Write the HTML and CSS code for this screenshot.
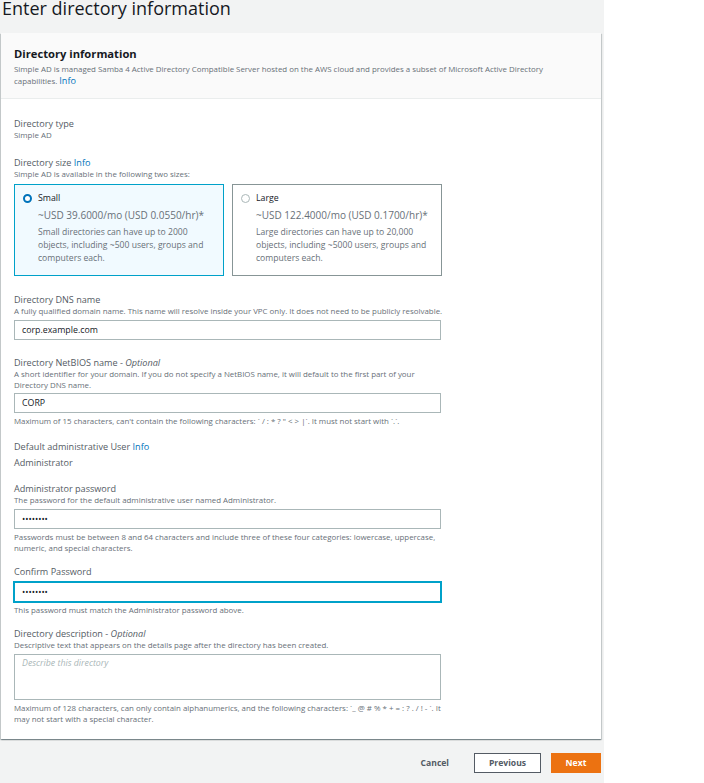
FILE: index.html
```html
<!DOCTYPE html>
<html lang="en">
<head>
<meta charset="utf-8">
<title>Enter directory information</title>
<link rel="stylesheet" href="styles.css">
</head>
<body>
<div class="page">
  <h1 class="title">Enter directory information</h1>
  <div class="card">
    <div class="card-header">
      <h2 class="card-title">Directory information</h2>
      <p class="card-desc">Simple AD is managed Samba 4 Active Directory Compatible Server hosted on the AWS cloud and provides a subset of Microsoft Active Directory capabilities. <a class="info info-lg">Info</a></p>
    </div>
    <div class="card-body">
      <div class="field f-type">
        <div class="label">Directory type</div>
        <div class="hint">Simple AD</div>
      </div>
      <div class="field f-size">
        <div class="label">Directory size <a class="info">Info</a></div>
        <div class="hint">Simple AD is available in the following two sizes:</div>
        <div class="tiles">
          <div class="tile tile-on">
            <div class="tile-head"><span class="radio radio-on"></span><span class="tile-name">Small</span></div>
            <div class="tile-price">~USD 39.6000/mo (USD 0.0550/hr)*</div>
            <div class="tile-desc">Small directories can have up to 2000 objects, including ~500 users, groups and computers each.</div>
          </div>
          <div class="tile">
            <div class="tile-head"><span class="radio"></span><span class="tile-name">Large</span></div>
            <div class="tile-price">~USD 122.4000/mo (USD 0.1700/hr)*</div>
            <div class="tile-desc">Large directories can have up to 20,000 objects, including ~5000 users, groups and computers each.</div>
          </div>
        </div>
      </div>
      <div class="field f-dns">
        <div class="label">Directory DNS name</div>
        <div class="hint">A fully qualified domain name. This name will resolve inside your VPC only. It does not need to be publicly resolvable.</div>
        <div class="input">corp.example.com</div>
      </div>
      <div class="field f-netbios">
        <div class="label">Directory NetBIOS name - <i>Optional</i></div>
        <div class="hint">A short identifier for your domain. If you do not specify a NetBIOS name, it will default to the first part of your Directory DNS name.</div>
        <div class="input">CORP</div>
        <div class="hint after">Maximum of 15 characters, can't contain the following characters: ` / : * ? " &lt; &gt; |`. It must not start with `.`.</div>
      </div>
      <div class="field f-user">
        <div class="label">Default administrative User <a class="info">Info</a></div>
        <div class="label value">Administrator</div>
      </div>
      <div class="field f-pass">
        <div class="label">Administrator password</div>
        <div class="hint">The password for the default administrative user named Administrator.</div>
        <div class="input dots">••••••••</div>
        <div class="hint after">Passwords must be between 8 and 64 characters and include three of these four categories: lowercase, uppercase, numeric, and special characters.</div>
      </div>
      <div class="field f-confirm">
        <div class="label">Confirm Password</div>
        <div class="input dots focus">••••••••</div>
        <div class="hint after">This password must match the Administrator password above.</div>
      </div>
      <div class="field f-desc">
        <div class="label">Directory description - <i>Optional</i></div>
        <div class="hint">Descriptive text that appears on the details page after the directory has been created.</div>
        <div class="input textarea"><span class="placeholder">Describe this directory</span></div>
        <div class="hint after">Maximum of 128 characters, can only contain alphanumerics, and the following characters: `_ @ # % * + = : ? . / ! - `. It may not start with a special character.</div>
      </div>
    </div>
  </div>
  <div class="actions">
    <span class="btn btn-link">Cancel</span>
    <span class="btn btn-normal">Previous</span>
    <span class="btn btn-primary">Next</span>
  </div>
</div>
</body>
</html>
```

FILE: styles.css
```css
* { box-sizing: border-box; }
html, body { margin: 0; padding: 0; background: #ffffff; }
body { font-family: "Open Sans", "Liberation Sans", sans-serif; color: #16191f; }

.page {
  width: 604px;
  min-height: 783px;
  background: #f2f3f3;
  overflow: hidden;
}

.title {
  margin: 0 0 17px 2px;
  font-size: 18px;
  line-height: 17px;
  font-weight: 400;
  color: #16191f;
}

.card {
  margin-left: 1px;
  width: 600px;
  margin-top: -1px;
  background: #ffffff;
  box-shadow: 0 1px 1px 0 rgba(0, 28, 36, 0.3), 1px 1px 1px 0 rgba(0, 28, 36, 0.15), -1px 1px 1px 0 rgba(0, 28, 36, 0.15);
}

.card-header {
  height: 66px;
  padding: 13px 13px 0 13px;
  background: #fafafa;
  border-bottom: 1px solid #eaeded;
}
.card-title {
  margin: 0;
  font-size: 11.2px;
  line-height: 16px;
  font-weight: 700;
  color: #16191f;
}
.card-desc {
  margin: 1px 0 0 0;
  max-width: 550px;
  font-size: 7.9px;
  line-height: 12px;
  color: #687078;
}

.info { color: #0073bb; text-decoration: none; }
.info-lg { font-size: 9.1px; line-height: 10px; }

.card-body { padding: 19px 13px 14px 13px; }

.label {
  font-size: 9.1px;
  line-height: 12px;
  color: #545b64;
}
.label i { font-style: italic; }
.hint {
  max-width: 430px;
  font-size: 7.9px;
  line-height: 11px;
  color: #687078;
}
.hint.after { margin-top: 3px; }

.field.f-size { margin-top: 16px; }
.field.f-dns { margin-top: 18px; }
.field.f-netbios { margin-top: 17px; }
.field.f-user { margin-top: 14px; }
.field.f-pass { margin-top: 14px; }
.field.f-confirm { margin-top: 12px; }
.field.f-desc { margin-top: 12px; }

.label.value { margin-top: 4px; }

.input {
  margin-top: 3px;
  width: 427px;
  height: 20px;
  border: 1px solid #aab7b8;
  background: #ffffff;
  padding: 0 7px;
  font-size: 8.8px;
  line-height: 18px;
  color: #16191f;
}
.f-netbios .input { margin-top: 2px; }
.f-confirm .input { margin-top: 4px; }
.input.dots { font-size: 8.6px; }
.input.focus { border-color: #00a1c9; box-shadow: 0 0 0 1px #00a1c9; }
.input.textarea { height: 46px; line-height: 16px; }
.placeholder { font-style: italic; color: #aab7b8; }

.tiles {
  margin-top: 4px;
  display: flex;
  gap: 8px;
}
.tile {
  width: 210px;
  height: 92px;
  border: 1px solid #879596;
  padding: 7px 9px 0 8px;
}
.tile-on {
  border-color: #00a1c9;
  background: #f1faff;
}
.tile-head {
  display: flex;
  align-items: center;
  height: 12px;
}
.radio {
  width: 9px;
  height: 9px;
  border-radius: 50%;
  border: 1px solid #aab7b8;
  background: #ffffff;
  margin-right: 6px;
  flex: none;
}
.radio-on {
  border: 2.5px solid #0073bb;
  background: #ffffff;
}
.tile-name {
  font-size: 8.8px;
  color: #16191f;
}
.tile-price {
  margin-top: 5px;
  padding-left: 15px;
  font-size: 10px;
  line-height: 13px;
  color: #687078;
}
.tile-desc {
  margin-top: 4px;
  padding-left: 15px;
  font-size: 8.6px;
  line-height: 13px;
  color: #687078;
}

.actions {
  margin-top: 14px;
  display: flex;
  justify-content: flex-end;
  align-items: center;
  padding-right: 3px;
}
.btn {
  font-size: 8.6px;
  font-weight: 700;
  height: 20px;
  line-height: 18px;
  text-align: center;
  border: 1px solid transparent;
}
.btn-link {
  color: #545b64;
  padding: 0 9px;
  margin-right: 15px;
}
.btn-normal {
  width: 67px;
  border-color: #545b64;
  background: #ffffff;
  color: #545b64;
  margin-right: 10px;
}
.btn-primary {
  width: 50px;
  background: #ec7211;
  border-color: #ec7211;
  color: #ffffff;
}
```
